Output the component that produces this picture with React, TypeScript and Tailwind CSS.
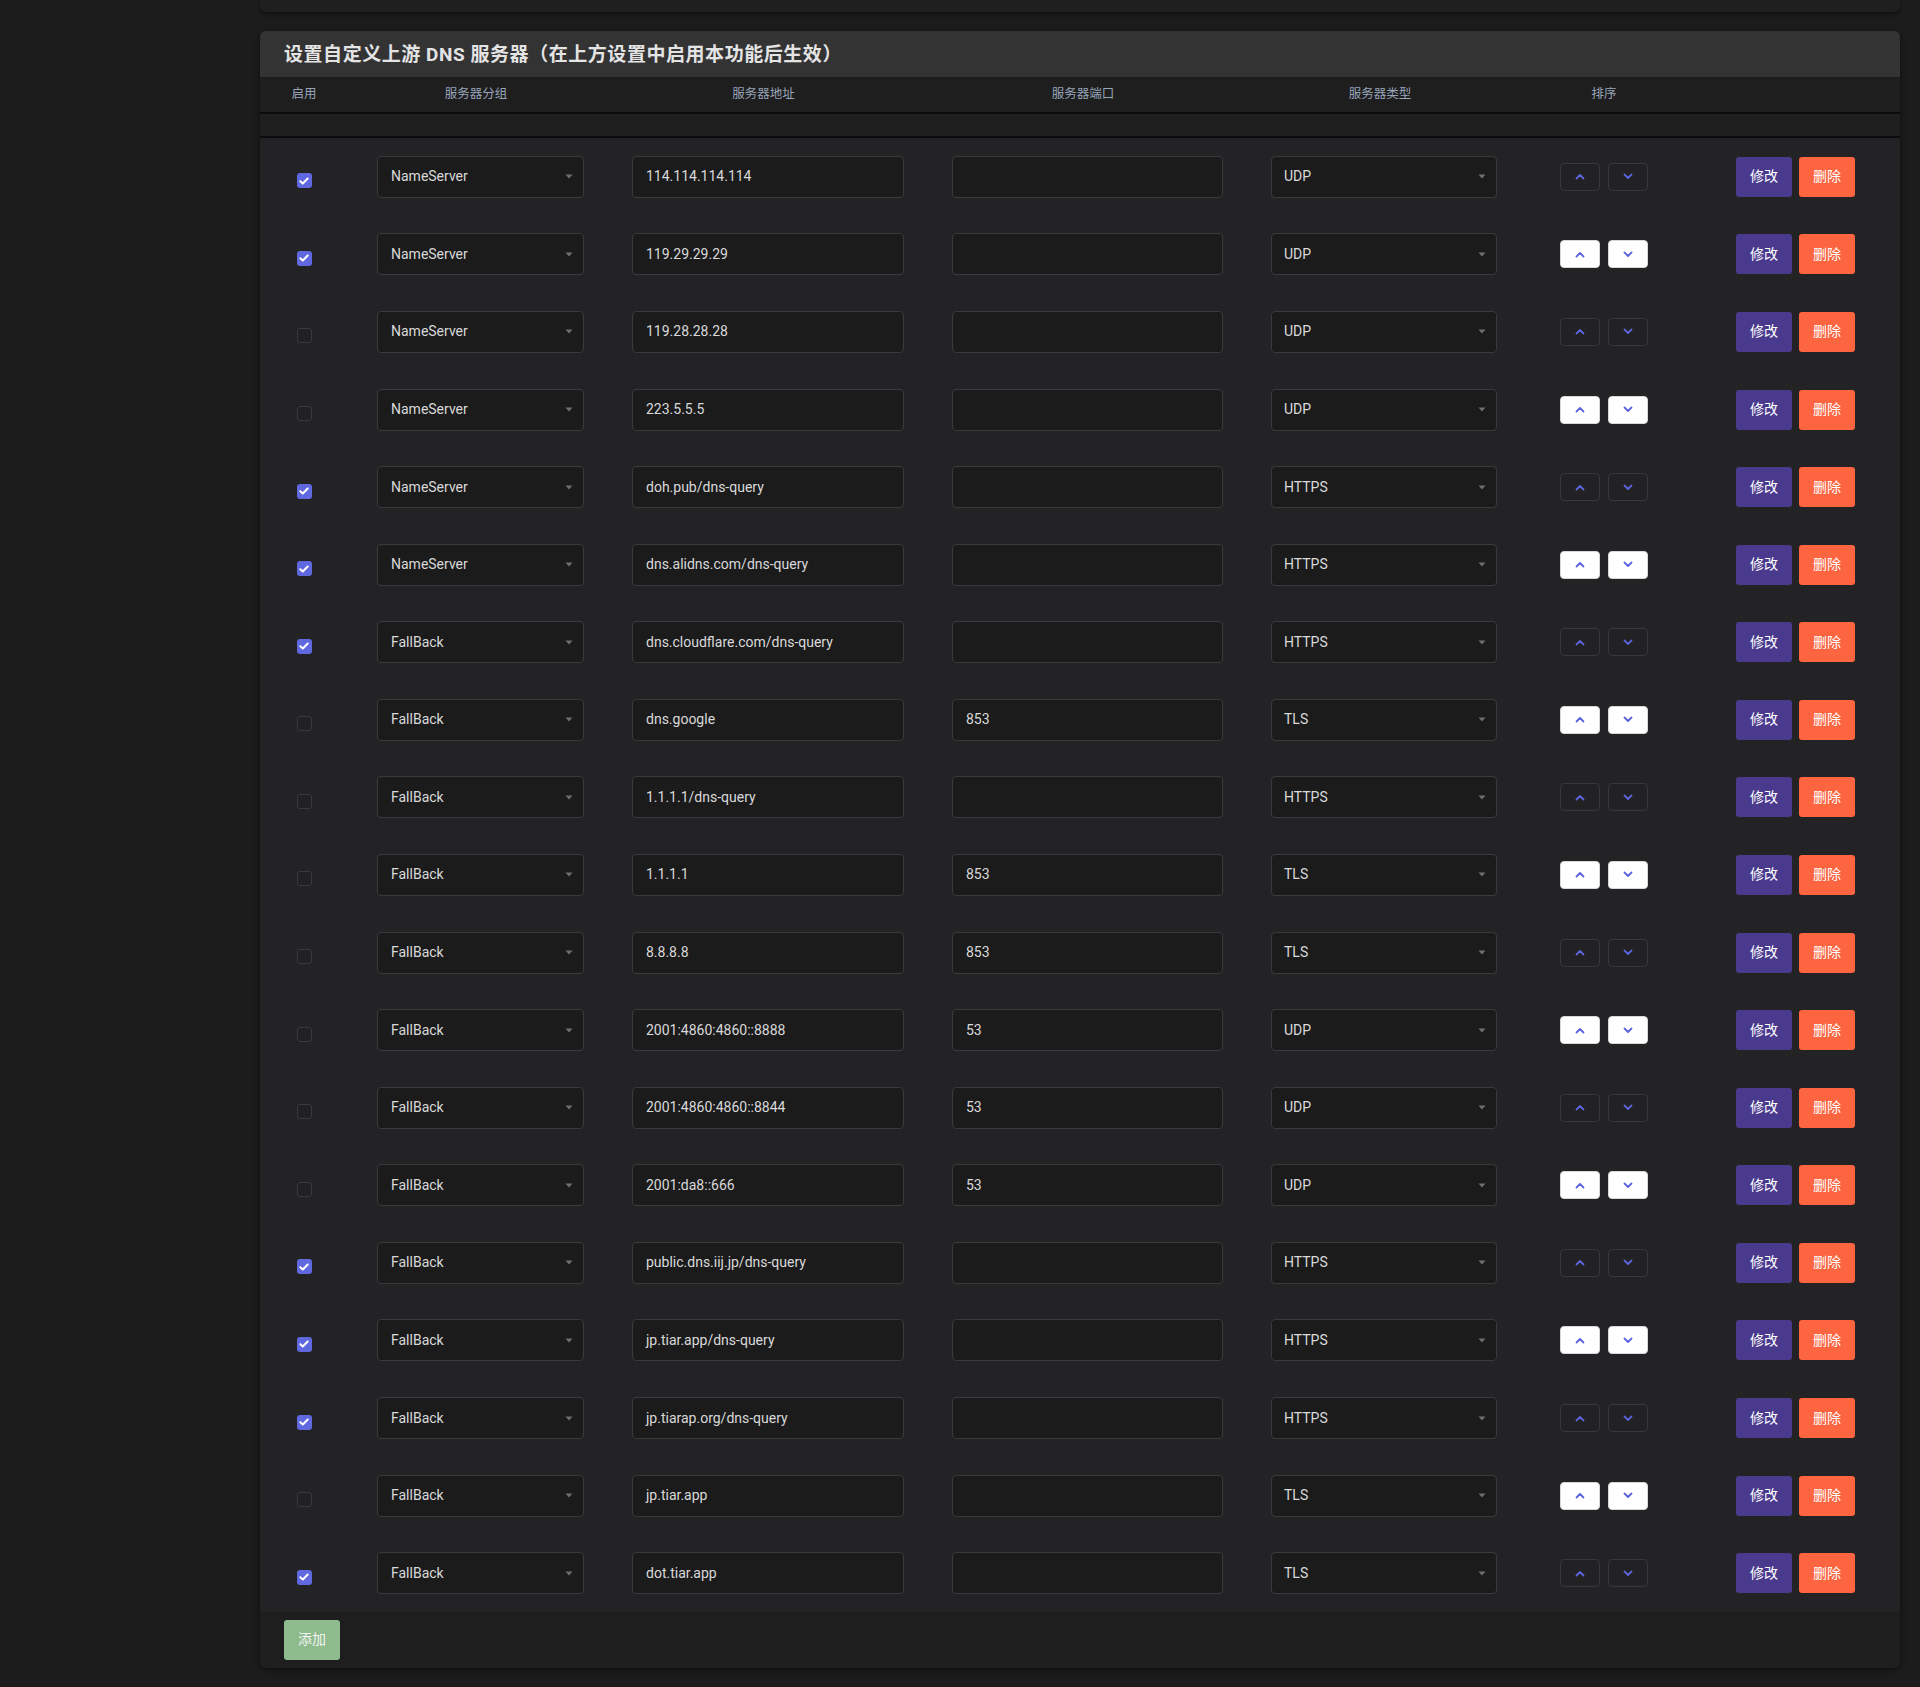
import React from "react";

type Row = { on: boolean; group: string; addr: string; port: string; type: string };

const rows: Row[] = [
  { on: true, group: "NameServer", addr: "114.114.114.114", port: "", type: "UDP" },
  { on: true, group: "NameServer", addr: "119.29.29.29", port: "", type: "UDP" },
  { on: false, group: "NameServer", addr: "119.28.28.28", port: "", type: "UDP" },
  { on: false, group: "NameServer", addr: "223.5.5.5", port: "", type: "UDP" },
  { on: true, group: "NameServer", addr: "doh.pub/dns-query", port: "", type: "HTTPS" },
  { on: true, group: "NameServer", addr: "dns.alidns.com/dns-query", port: "", type: "HTTPS" },
  { on: true, group: "FallBack", addr: "dns.cloudflare.com/dns-query", port: "", type: "HTTPS" },
  { on: false, group: "FallBack", addr: "dns.google", port: "853", type: "TLS" },
  { on: false, group: "FallBack", addr: "1.1.1.1/dns-query", port: "", type: "HTTPS" },
  { on: false, group: "FallBack", addr: "1.1.1.1", port: "853", type: "TLS" },
  { on: false, group: "FallBack", addr: "8.8.8.8", port: "853", type: "TLS" },
  { on: false, group: "FallBack", addr: "2001:4860:4860::8888", port: "53", type: "UDP" },
  { on: false, group: "FallBack", addr: "2001:4860:4860::8844", port: "53", type: "UDP" },
  { on: false, group: "FallBack", addr: "2001:da8::666", port: "53", type: "UDP" },
  { on: true, group: "FallBack", addr: "public.dns.iij.jp/dns-query", port: "", type: "HTTPS" },
  { on: true, group: "FallBack", addr: "jp.tiar.app/dns-query", port: "", type: "HTTPS" },
  { on: true, group: "FallBack", addr: "jp.tiarap.org/dns-query", port: "", type: "HTTPS" },
  { on: false, group: "FallBack", addr: "jp.tiar.app", port: "", type: "TLS" },
  { on: true, group: "FallBack", addr: "dot.tiar.app", port: "", type: "TLS" },
];

const Caret = () => (
  <svg width="8" height="5" viewBox="0 0 8 5" className="shrink-0">
    <path d="M0.5 0.5 L7.5 0.5 L4 4.5 Z" fill="#6f6f72" />
  </svg>
);

const Chevron = ({ up }: { up: boolean }) => (
  <svg width="10" height="7" viewBox="0 0 10 7">
    <path
      d={up ? "M1.5 5.5 L5 2 L8.5 5.5" : "M1.5 1.5 L5 5 L8.5 1.5"}
      fill="none"
      stroke="#5c63dc"
      strokeWidth="1.8"
      strokeLinecap="round"
      strokeLinejoin="round"
    />
  </svg>
);

const Check = ({ on }: { on: boolean }) =>
  on ? (
    <div className="w-[15px] h-[15px] rounded-[3px] bg-[#6068e0] flex items-center justify-center">
      <svg width="10" height="8" viewBox="0 0 10 8">
        <path d="M1.3 4.2 L3.8 6.5 L8.7 1.5" fill="none" stroke="#ffffff" strokeWidth="2" strokeLinecap="round" strokeLinejoin="round" />
      </svg>
    </div>
  ) : (
    <div className="w-[15px] h-[15px] rounded-[3px] border border-[#3a3a3c] bg-[#212123]" />
  );

export default function App() {
  return (
    <div
      className="w-[1920px] h-[1687px] overflow-hidden bg-[#1c1c1d] text-[#d9d9d9]"
      style={{ fontFamily: 'Roboto, "Noto Sans CJK SC", sans-serif' }}
    >
      <div className="pl-[260px] pr-[20px]">
        {/* top card remnant */}
        <div className="h-[12px] bg-[#1f1f20] rounded-b-[6px] shadow-[0_2px_4px_rgba(0,0,0,0.45)]" />

        {/* main card */}
        <div className="mt-[19px] rounded-t-[6px] rounded-b-[6px] overflow-hidden shadow-[0_2px_6px_rgba(0,0,0,0.5)] bg-[#1e1e1f]">
          <div className="h-[46px] bg-[#333334] flex items-center pl-[24px] pt-[2px]">
            <span className="text-[19px] font-bold text-[#e4e4e4] tracking-[0.55px]">
              设置自定义上游 DNS 服务器（在上方设置中启用本功能后生效）
            </span>
          </div>

          {/* header row */}
          <div className="h-[37px] bg-[#1e1e1f] flex items-center text-[12.5px] text-[#98a4b8] border-b-2 border-[#0c0c0d]">
            <div className="w-[88px] text-center">启用</div>
            <div className="ml-[29px] w-[207px] text-center pr-[9px]">服务器分组</div>
            <div className="ml-[48px] w-[272px] text-center pr-[9px]">服务器地址</div>
            <div className="ml-[48px] w-[271px] text-center pr-[9px]">服务器端口</div>
            <div className="ml-[48px] w-[226px] text-center pr-[8px]">服务器类型</div>
            <div className="ml-[63px] w-[88px] text-center">排序</div>
          </div>
          <div className="h-[24px] bg-[#1f1f20] border-b-2 border-[#0c0c0d]" />

          {/* rows */}
          <div className="bg-[#232325]">
            {rows.map((r, i) => {
              const light = i % 2 === 1;
              return (
                <div key={i} className="h-[77.58px] flex items-center text-[14px]">
                  <div className="w-[88px] flex justify-center mt-[8px]">
                    <Check on={r.on} />
                  </div>
                  <div className="ml-[29px] w-[207px] h-[42px] rounded-[4px] border border-[#3a3a3c] bg-[#1b1b1c] flex items-center justify-between pl-[13px] pr-[10px]">
                    <span>{r.group}</span>
                    <Caret />
                  </div>
                  <div className="ml-[48px] w-[272px] h-[42px] rounded-[4px] border border-[#3a3a3c] bg-[#1b1b1c] flex items-center pl-[13px]">
                    <span>{r.addr}</span>
                  </div>
                  <div className="ml-[48px] w-[271px] h-[42px] rounded-[4px] border border-[#3a3a3c] bg-[#1b1b1c] flex items-center pl-[13px]">
                    <span>{r.port}</span>
                  </div>
                  <div className="ml-[48px] w-[226px] h-[42px] rounded-[4px] border border-[#3a3a3c] bg-[#1b1b1c] flex items-center justify-between pl-[12px] pr-[10px]">
                    <span>{r.type}</span>
                    <Caret />
                  </div>
                  <div className="ml-[63px] flex gap-[8px]">
                    <div
                      className={
                        light
                          ? "w-[40px] h-[28px] rounded-[4px] border border-[#d8d8d8] bg-white flex items-center justify-center"
                          : "w-[40px] h-[28px] rounded-[4px] border border-[#38383a] bg-[#222224] flex items-center justify-center"
                      }
                    >
                      <Chevron up={true} />
                    </div>
                    <div
                      className={
                        light
                          ? "w-[40px] h-[28px] rounded-[4px] border border-[#d8d8d8] bg-white flex items-center justify-center"
                          : "w-[40px] h-[28px] rounded-[4px] border border-[#38383a] bg-[#222224] flex items-center justify-center"
                      }
                    >
                      <Chevron up={false} />
                    </div>
                  </div>
                  <div className="ml-[88px] flex gap-[7px]">
                    <div className="w-[56px] h-[40px] rounded-[3px] bg-[#4a3a8e] text-white flex items-center justify-center text-[14px]">
                      修改
                    </div>
                    <div className="w-[56px] h-[40px] rounded-[3px] bg-[#fd6541] text-white flex items-center justify-center text-[14px]">
                      删除
                    </div>
                  </div>
                </div>
              );
            })}
          </div>

          {/* footer */}
          <div className="h-[56px] bg-[#1e1e1f] flex items-center pl-[24px]">
            <div className="w-[56px] h-[40px] rounded-[3px] bg-[#8dbb8c] text-[#f4f4f4] flex items-center justify-center text-[14px]">
              添加
            </div>
          </div>
        </div>
      </div>
    </div>
  );
}
